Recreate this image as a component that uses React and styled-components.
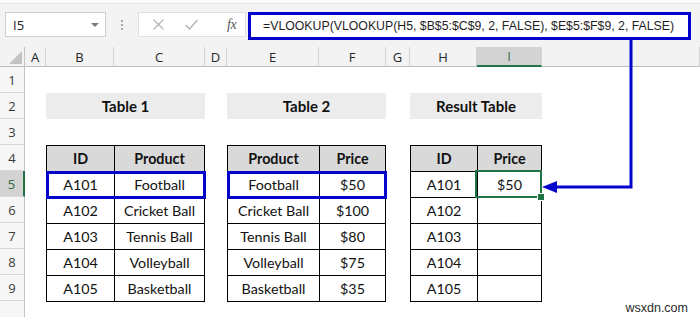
import React from 'react';
import styled, { createGlobalStyle, css } from 'styled-components';

const GlobalStyle = createGlobalStyle`
  html, body { margin: 0; padding: 0; background: #fff; }
  body { width: 700px; height: 317px; overflow: hidden; }
  * { box-sizing: border-box; }
`;

const BLUE = '#0303cc';
const GREEN = '#217346';

const Window = styled.div`
  position: relative;
  width: 700px;
  height: 317px;
  overflow: hidden;
  background: #fff;
  font-family: "Liberation Sans", Arial, sans-serif;
`;

/* ---------- formula bar ---------- */
const FormulaBar = styled.div`
  height: 47px;
  display: flex;
  align-items: flex-start;
  padding: 12px 9px 0 5px;
  background: linear-gradient(#fafafa 0 3px, #e2e2e2 3px 4px, #f3f3f3 4px);
`;

const NameBox = styled.div`
  width: 101px;
  height: 25px;
  display: flex;
  align-items: center;
  justify-content: space-between;
  padding: 0 6px 0 7px;
  background: #fff;
  border: 1px solid #cfcfcf;
  font-family: "Open Sans", sans-serif;
  font-size: 13px;
  color: #222;
`;

const DropArrow = styled.span`
  width: 0;
  height: 0;
  border-left: 4px solid transparent;
  border-right: 4px solid transparent;
  border-top: 4px solid #7a7a7a;
`;

const Grip = styled.div`
  width: 32px;
  height: 25px;
  display: flex;
  flex-direction: column;
  align-items: center;
  justify-content: center;
  gap: 2px;
`;

const GripDot = styled.span`
  width: 2px;
  height: 2px;
  background: #a8a8a8;
`;

const FxBox = styled.div`
  width: 108px;
  height: 25px;
  display: flex;
  align-items: center;
  background: #fff;
  border: 1px solid #e0e0e0;
`;

const FxIcon = styled.span`
  display: flex;
  align-items: center;
  justify-content: center;
  width: 16px;
  margin-left: ${(p) => p.$gap}px;
  color: #b5b5b5;
`;

const FxLabel = styled.span`
  margin-left: ${(p) => p.$gap}px;
  font-family: "Liberation Serif", serif;
  font-style: italic;
  font-size: 14px;
  color: #555;
  letter-spacing: -0.5px;
`;

const FormulaInput = styled.div`
  flex: 1;
  height: 28px;
  margin-left: 2px;
  display: flex;
  align-items: center;
  padding-left: 12px;
  background: #fff;
  border: 3px solid ${BLUE};
  font-size: 12.3px;
  color: #1e1e1e;
  white-space: nowrap;
`;

/* ---------- sheet grid ---------- */
const Sheet = styled.div`
  display: grid;
  grid-template-columns: 25px 21px 68px 91px 22px 92px 67px 24px 67px 65px 1fr;
  grid-template-rows: 20px repeat(10, 26px);
  background: #fff;
`;

const headerText = css`
  font-family: "Open Sans", sans-serif;
  font-size: 13px;
  display: flex;
  align-items: center;
  justify-content: center;
`;

const Corner = styled.div`
  grid-column: 1;
  grid-row: 1;
  position: relative;
  background: #f3f3f3;
  border-right: 1px solid #c4c4c4;
  border-bottom: 1px solid #bdbdbd;
`;

const CornerTriangle = styled.span`
  position: absolute;
  right: 2px;
  bottom: 2px;
  width: 13px;
  height: 13px;
  background: #c3c3c3;
  clip-path: polygon(100% 0, 100% 100%, 0 100%);
`;

const ColHeader = styled.div`
  ${headerText};
  grid-column: ${(p) => p.$col};
  grid-row: 1;
  color: ${(p) => (p.$active ? '#3d6b4f' : '#262626')};
  background: ${(p) => (p.$active ? '#d3d3d3' : '#f3f3f3')};
  border-right: 1px solid #d4d4d4;
  border-bottom: ${(p) => (p.$active ? `2px solid ${GREEN}` : '1px solid #bdbdbd')};
`;

const RowHeader = styled.div`
  ${headerText};
  grid-column: 1;
  grid-row: ${(p) => p.$row};
  color: ${(p) => (p.$active ? '#2f6a45' : '#3a3a3a')};
  background: ${(p) => (p.$active ? '#d3d3d3' : '#f6f6f6')};
  border-bottom: 1px solid #d8d8d8;
  border-right: ${(p) => (p.$active ? `2px solid ${GREEN}` : '1px solid #c4c4c4')};
`;

const cellFont = css`
  font-family: "Lato", "Liberation Sans", sans-serif;
  font-size: 14.3px;
  color: #111;
`;

const Title = styled.div`
  ${cellFont};
  grid-column: ${(p) => p.$cols};
  grid-row: 3;
  display: flex;
  align-items: center;
  justify-content: center;
  background: #ececec;
  font-weight: 700;
  font-size: 15px;
`;

const Table = styled.div`
  grid-column: ${(p) => p.$cols};
  grid-row: 5 / 11;
  align-self: start;
  display: flex;
  flex-direction: column;
  border-top: 1px solid #000;
  border-left: 1px solid #000;
`;

const Row = styled.div`
  position: relative;
  display: grid;
  grid-template-columns: ${(p) => p.$template};
  ${(p) =>
    p.$highlight &&
    css`
      &::after {
        content: '';
        position: absolute;
        inset: -1px;
        border: 3px solid ${BLUE};
        pointer-events: none;
        z-index: 2;
      }
    `}
`;

const Cell = styled.div`
  ${cellFont};
  position: relative;
  height: 26px;
  display: flex;
  align-items: center;
  justify-content: center;
  border-right: 1px solid #000;
  border-bottom: 1px solid #000;
  background: ${(p) => (p.$head ? '#d9d9d9' : '#fff')};
  font-weight: ${(p) => (p.$head ? 700 : 400)};
  ${(p) =>
    p.$selected &&
    css`
      &::after {
        content: '';
        position: absolute;
        inset: -2px -1px -1px -3px;
        border: 2px solid ${GREEN};
        pointer-events: none;
        z-index: 2;
      }
      &::before {
        content: '';
        position: absolute;
        right: -4px;
        bottom: -4px;
        width: 6px;
        height: 6px;
        background: ${GREEN};
        border: 1px solid #fff;
        z-index: 3;
      }
    `}
`;

const Watermark = styled.div`
  grid-column: 11;
  grid-row: 11;
  justify-self: end;
  padding-right: 12px;
  font-size: 12.5px;
  line-height: 14px;
  color: #2a2a2a;
`;

const ArrowLayer = styled.svg`
  position: absolute;
  left: 0;
  top: 0;
  width: 700px;
  height: 317px;
  pointer-events: none;
  z-index: 5;
`;

const LETTERS = ['A', 'B', 'C', 'D', 'E', 'F', 'G', 'H', 'I', ''];

const tables = [
  {
    title: 'Table 1',
    cols: '3 / 5',
    template: '68px 90px',
    head: ['ID', 'Product'],
    rows: [
      ['A101', 'Football'],
      ['A102', 'Cricket Ball'],
      ['A103', 'Tennis Ball'],
      ['A104', 'Volleyball'],
      ['A105', 'Basketball'],
    ],
    highlight: 0,
  },
  {
    title: 'Table 2',
    cols: '6 / 8',
    template: '92px 66px',
    head: ['Product', 'Price'],
    rows: [
      ['Football', '$50'],
      ['Cricket Ball', '$100'],
      ['Tennis Ball', '$80'],
      ['Volleyball', '$75'],
      ['Basketball', '$35'],
    ],
    highlight: 0,
  },
  {
    title: 'Result Table',
    cols: '9 / 11',
    template: '67px 64px',
    head: ['ID', 'Price'],
    rows: [
      ['A101', '$50'],
      ['A102', ''],
      ['A103', ''],
      ['A104', ''],
      ['A105', ''],
    ],
    selected: [0, 1],
  },
];

const XIcon = () => (
  <svg width="13" height="13" viewBox="0 0 13 13" fill="none" stroke="currentColor" strokeWidth="1.3">
    <path d="M1.5 1.5 L11.5 11.5 M11.5 1.5 L1.5 11.5" />
  </svg>
);

const CheckIcon = () => (
  <svg width="15" height="13" viewBox="0 0 15 13" fill="none" stroke="currentColor" strokeWidth="1.5">
    <path d="M1.5 7 L5.5 11 L13.5 2" />
  </svg>
);

export default function App() {
  return (
    <Window>
      <GlobalStyle />
      <FormulaBar>
        <NameBox>
          I5
          <DropArrow />
        </NameBox>
        <Grip>
          <GripDot />
          <GripDot />
          <GripDot />
        </Grip>
        <FxBox>
          <FxIcon $gap={11}>
            <XIcon />
          </FxIcon>
          <FxIcon $gap={17}>
            <CheckIcon />
          </FxIcon>
          <FxLabel $gap={28}>fx</FxLabel>
        </FxBox>
        <FormulaInput>=VLOOKUP(VLOOKUP(H5, $B$5:$C$9, 2, FALSE), $E$5:$F$9, 2, FALSE)</FormulaInput>
      </FormulaBar>

      <Sheet>
        <Corner>
          <CornerTriangle />
        </Corner>
        {LETTERS.map((l, i) => (
          <ColHeader key={i} $col={i + 2} $active={l === 'I'}>
            {l}
          </ColHeader>
        ))}
        {Array.from({ length: 10 }, (_, i) => (
          <RowHeader key={i} $row={i + 2} $active={i + 1 === 5}>
            {i < 9 ? i + 1 : ''}
          </RowHeader>
        ))}

        {tables.map((t) => (
          <React.Fragment key={t.title}>
            <Title $cols={t.cols}>{t.title}</Title>
            <Table $cols={t.cols}>
              <Row $template={t.template}>
                {t.head.map((h) => (
                  <Cell key={h} $head>
                    {h}
                  </Cell>
                ))}
              </Row>
              {t.rows.map((r, ri) => (
                <Row key={ri} $template={t.template} $highlight={t.highlight === ri}>
                  {r.map((c, ci) => (
                    <Cell
                      key={ci}
                      $selected={t.selected && t.selected[0] === ri && t.selected[1] === ci}
                    >
                      {c}
                    </Cell>
                  ))}
                </Row>
              ))}
            </Table>
          </React.Fragment>
        ))}

        <Watermark>wsxdn.com</Watermark>
      </Sheet>

      <ArrowLayer viewBox="0 0 700 317">
        <path d="M631 40 V187 H554" fill="none" stroke={BLUE} strokeWidth="3" />
        <polygon points="542,187 557,181 557,193" fill={BLUE} />
      </ArrowLayer>
    </Window>
  );
}
